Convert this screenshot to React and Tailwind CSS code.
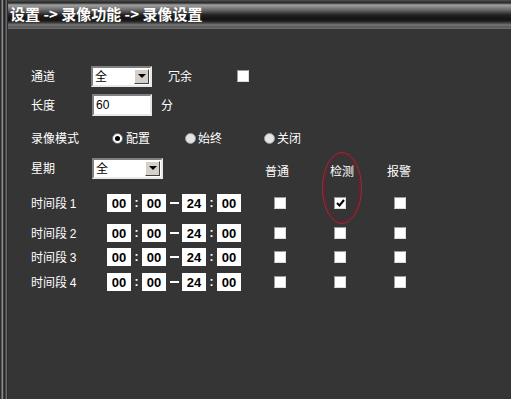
import React from "react";

const cjk = { fontFamily: '"Noto Sans CJK SC", "Noto Sans", sans-serif' };
const latin = { fontFamily: '"Liberation Sans", Arial, sans-serif' };

function Label({ w, children }) {
  return (
    <div className={`${w} shrink-0 text-[12px] leading-none text-white`} style={cjk}>
      {children}
    </div>
  );
}

function Select({ w, value }) {
  return (
    <div className={`${w} h-[21px] shrink-0 flex items-center justify-between bg-white border-2 border-t-[#808080] border-l-[#808080] border-b-[#e8e8e8] border-r-[#e8e8e8] pl-[2px] pr-[1px]`}>
      <span className="text-[12px] leading-none text-black" style={cjk}>{value}</span>
      <div className="w-[15px] h-[15px] flex items-center justify-center bg-[#d4d0c8] border border-t-white border-l-white border-b-[#404040] border-r-[#404040]">
        <div className="w-0 h-0 border-l-[4px] border-r-[4px] border-t-[4px] border-l-transparent border-r-transparent border-t-black" />
      </div>
    </div>
  );
}

function Check({ checked }) {
  return (
    <div className="w-[12px] h-[12px] bg-white border border-t-[#9a9a9a] border-l-[#9a9a9a] border-b-[#dcdcdc] border-r-[#dcdcdc] flex items-center justify-center">
      {checked && (
        <svg width="9" height="8" viewBox="0 0 9 8">
          <polyline points="1,4 3.5,6.5 8,1" fill="none" stroke="black" strokeWidth="2" />
        </svg>
      )}
    </div>
  );
}

function Radio({ on }) {
  return (
    <div className={`w-[11px] h-[11px] rounded-full border flex items-center justify-center ${on ? "bg-white border-[#666]" : "bg-[#e4e4e4] border-[#9a9a9a]"}`}>
      {on && <div className="w-[5px] h-[5px] rounded-full bg-black" />}
    </div>
  );
}

function TimeBox({ v }) {
  return (
    <div className="w-[24px] h-[18px] bg-white flex items-center justify-center text-[13px] font-bold text-black leading-none" style={latin}>
      {v}
    </div>
  );
}

function CheckCols({ values }) {
  return (
    <>
      {values.map((c, i) => (
        <div key={i} className="w-[60px] flex justify-center">
          <Check checked={c} />
        </div>
      ))}
    </>
  );
}

const periods = [
  { n: 1, mt: "mt-[13px]", checks: [false, true, false] },
  { n: 2, mt: "mt-[8px]", checks: [false, false, false] },
  { n: 3, mt: "mt-[2px]", checks: [false, false, false] },
  { n: 4, mt: "mt-[3px]", checks: [false, false, false] },
];

export default function App() {
  return (
    <div className="relative w-[511px] h-[399px] bg-[#353535] flex overflow-hidden">
      {/* left frame */}
      <div className="flex shrink-0 h-full">
        <div className="w-px bg-[#2a2a2a]" />
        <div className="w-px bg-[#5c5c5c]" />
        <div className="w-px bg-[#8a8a8a]" />
        <div className="w-px bg-[#3c3c3c]" />
        <div className="w-px bg-[#262626]" />
        <div className="w-px bg-[#4a4a4a]" />
        <div className="w-px bg-[#6a6a6a]" />
        <div className="w-px bg-[#2e2e2e]" />
      </div>

      <div className="flex-1 flex flex-col">
        {/* title bar */}
        <div className="h-[29px] flex items-center pl-[2px] bg-[linear-gradient(to_bottom,#3a3a3a_0px,#575757_1px,#222_2px,#333_3px,#a0a0a0_5px,#8a8a8a_7px,#5a5a5a_11px,#222_15px,#141414_19px,#1c1c1c_21px,#444_23px,#787878_25px,#555_27px,#6a6a6a_28px)]">
          <span className="text-[15px] font-bold text-white leading-none pb-[2px]" style={cjk}>
            设置 -&gt; 录像功能 -&gt; 录像设置
          </span>
        </div>

        <div className="flex flex-col pl-[23px]">
          {/* 通道 */}
          <div className="mt-[36px] h-[22px] flex items-center">
            <Label w="w-[60px]">通道</Label>
            <Select w="w-[61px]" value="全" />
            <div className="ml-[16px] w-[69px] text-[12px] leading-none text-white" style={cjk}>冗余</div>
            <Check />
          </div>

          {/* 长度 */}
          <div className="mt-[7px] h-[22px] flex items-center">
            <Label w="w-[61px]">长度</Label>
            <div className="w-[60px] h-[22px] bg-white border-2 border-t-[#808080] border-l-[#808080] border-b-[#e8e8e8] border-r-[#e8e8e8] flex items-center pl-[2px] text-[12px] text-black leading-none" style={latin}>
              60
            </div>
            <div className="ml-[9px] text-[12px] leading-none text-white" style={cjk}>分</div>
          </div>

          {/* 录像模式 */}
          <div className="mt-[11px] h-[22px] flex items-center">
            <Label w="w-[81px]">录像模式</Label>
            <div className="w-[73px] flex items-center gap-[3px]">
              <Radio on />
              <span className="text-[12px] leading-none text-white" style={cjk}>配置</span>
            </div>
            <div className="w-[79px] flex items-center gap-[2px]">
              <Radio />
              <span className="text-[12px] leading-none text-white" style={cjk}>始终</span>
            </div>
            <div className="flex items-center gap-[2px]">
              <Radio />
              <span className="text-[12px] leading-none text-white" style={cjk}>关闭</span>
            </div>
          </div>

          {/* 星期 */}
          <div className="mt-[8px] h-[22px] flex items-center">
            <Label w="w-[61px]">星期</Label>
            <Select w="w-[71px]" value="全" />
            <div className="w-[84px]" />
            <div className="w-[60px] flex justify-center pt-[5px] text-[12px] leading-none text-white" style={cjk}>普通</div>
            <div className="w-[70px] flex justify-center pt-[5px] text-[12px] leading-none text-white" style={cjk}>检测</div>
            <div className="w-[44px] flex justify-center pt-[5px] text-[12px] leading-none text-white" style={cjk}>报警</div>
          </div>

          {/* 时间段 */}
          {periods.map((p) => (
            <div key={p.n} className={`${p.mt} h-[22px] flex items-center`}>
              <Label w="w-[76px]">
                时间段 <span style={latin}>{p.n}</span>
              </Label>
              <TimeBox v="00" />
              <div className="w-[11px] text-center text-white text-[12px] font-bold leading-none" style={latin}>:</div>
              <TimeBox v="00" />
              <div className="w-[16px] flex justify-center">
                <div className="w-[9px] h-[2px] bg-white" />
              </div>
              <TimeBox v="24" />
              <div className="w-[11px] text-center text-white text-[12px] font-bold leading-none" style={latin}>:</div>
              <TimeBox v="00" />
              <div className="w-[9px]" />
              <CheckCols values={p.checks} />
            </div>
          ))}
        </div>
      </div>

      {/* red annotation ellipse */}
      <svg className="absolute left-[320px] top-[150px]" width="44" height="78" viewBox="0 0 44 78">
        <ellipse cx="22" cy="38" rx="19.5" ry="35.5" fill="none" stroke="#a82434" strokeWidth="1" />
        <ellipse cx="22" cy="38" rx="17.5" ry="33.5" fill="none" stroke="#7a1a26" strokeWidth="1" />
      </svg>
    </div>
  );
}
